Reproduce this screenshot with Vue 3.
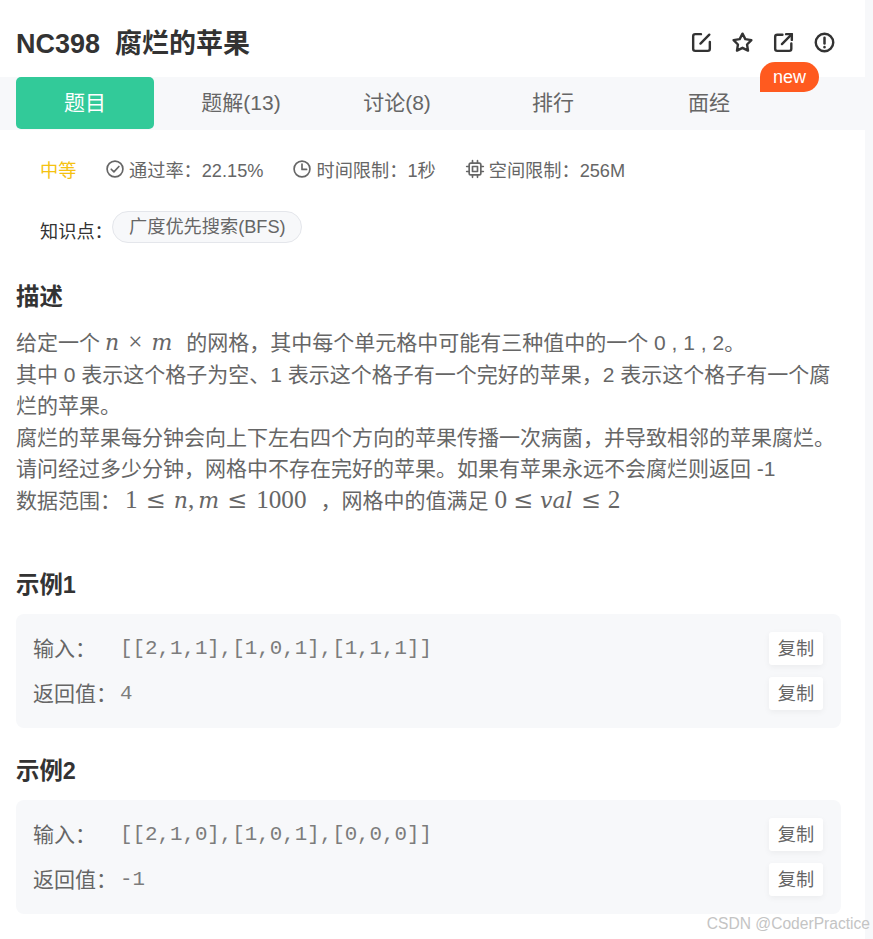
<script setup>
const tabs = ['题目', '题解(13)', '讨论(8)', '排行', '面经']
const examples = [
  { title: '示例1', input: '[[2,1,1],[1,0,1],[1,1,1]]', output: '4' },
  { title: '示例2', input: '[[2,1,0],[1,0,1],[0,0,0]]', output: '-1' }
]
</script>

<template>
  <div class="page">
    <main class="main">
      <header class="head">
        <h1 class="title">NC398&nbsp;&nbsp;腐烂的苹果</h1>
        <div class="actions">
          <svg class="act" viewBox="0 0 24 24"><path d="M11.500 4H6a2 2 0 0 0-2 2v12a2 2 0 0 0 2 2h12a2 2 0 0 0 2-2v-6.500" /><path d="M11 13 19.500 4.500" /></svg>
          <svg class="act" viewBox="0 0 24 24"><path d="M12 3.500 14.700 8.780 20.560 9.720 16.370 13.920 17.290 19.780 12 17.100 6.710 19.780 7.630 13.920 3.440 9.720 9.300 8.780z" /></svg>
          <svg class="act" viewBox="0 0 24 24"><path d="M11 4.500H6a2 2 0 0 0-2 2v11.500a2 2 0 0 0 2 2h11.500a2 2 0 0 0 2-2v-5" /><path d="M10.500 13.500 20 4" /><path d="M14.500 4H20v5.500" /></svg>
          <svg class="act" viewBox="0 0 24 24"><circle cx="12" cy="12" r="8.400" /><path d="M12 7.500v5.500" stroke-width="2.400" /><path d="M12 16.200v.3" stroke-width="2.400" /></svg>
        </div>
      </header>

      <nav class="tabs">
        <div v-for="(t, i) in tabs" :key="t" class="tab" :class="{ active: i === 0 }">{{ t }}</div>
        <span class="badge">new</span>
      </nav>

      <section class="meta">
        <span class="level">中等</span>
        <span class="stat">
          <svg class="mini" viewBox="0 0 24 24"><circle cx="12" cy="12" r="9.500" /><path d="M7.500 12.300l3.200 3.200 6-6.500" /></svg>
          通过率：22.15%
        </span>
        <span class="stat">
          <svg class="mini" viewBox="0 0 24 24"><circle cx="12" cy="12" r="9.500" /><path d="M12 6v6.500h5.500" /></svg>
          时间限制：1秒
        </span>
        <span class="stat">
          <svg class="mini" viewBox="0 0 24 24"><rect x="5" y="5" width="14" height="14" rx="2" /><rect x="9" y="9" width="6" height="6" /><path d="M9 2v3M15 2v3M9 19v3M15 19v3M2 9h3M2 15h3M19 9h3M19 15h3" /></svg>
          空间限制：256M
        </span>
      </section>

      <section class="topics">
        <span class="topics-label">知识点：</span>
        <span class="chip">广度优先搜索(BFS)</span>
      </section>

      <h2 class="h-desc">描述</h2>
      <div class="desc">
        <p>给定一个<span class="math m-nm"><i>n</i><span class="op">×</span><i>m</i></span>的网格，其中每个单元格中可能有三种值中的一个 0 , 1 , 2。</p>
        <p>其中 0 表示这个格子为空、1 表示这个格子有一个完好的苹果，2 表示这个格子有一个腐烂的苹果。</p>
        <p>腐烂的苹果每分钟会向上下左右四个方向的苹果传播一次病菌，并导致相邻的苹果腐烂。</p>
        <p>请问经过多少分钟，网格中不存在完好的苹果。如果有苹果永远不会腐烂则返回 -1</p>
        <p>数据范围：<span class="math m-range">1<span class="rel r1">≤</span><i>n</i>,<i class="after-comma">m</i><span class="rel r2">≤</span>1000</span>，网格中的值满足 <span class="math">0<span class="rel r3">≤</span><i>val</i><span class="rel r4">≤</span>2</span></p>
      </div>

      <section v-for="ex in examples" :key="ex.title" class="example">
        <h2 class="h-ex">{{ ex.title }}</h2>
        <div class="card">
          <div class="row">
            <span class="label">输入：</span>
            <code class="code">{{ ex.input }}</code>
            <button class="copy">复制</button>
          </div>
          <div class="row">
            <span class="label">返回值：</span>
            <code class="code">{{ ex.output }}</code>
            <button class="copy">复制</button>
          </div>
        </div>
      </section>
    </main>
    <aside class="strip"></aside>
    <span class="mark">CSDN @CoderPractice</span>
  </div>
</template>

<style scoped>
.page {
  position: relative;
  display: flex;
  width: 873px;
  height: 939px;
  overflow: hidden;
  background: #fff;
  color: #666;
  font-family: "Liberation Sans", "Noto Sans CJK SC", sans-serif;
}
.main { width: 865px; flex: none; }
.strip { flex: 1; background: #f7f8fa; }
.head {
  height: 77px;
  padding: 10px 28px 0 16px;
  box-sizing: border-box;
  display: flex;
  align-items: center;
  justify-content: space-between;
}
.title { margin: 0; font-size: 27px; line-height: 36px; font-weight: 700; color: #333; }
.actions { display: flex; gap: 16px; position: relative; top: -1px; }
.act { width: 25px; height: 25px; fill: none; stroke: #333; stroke-width: 2.300; stroke-linecap: round; stroke-linejoin: round; }
.tabs {
  position: relative;
  display: flex;
  gap: 18px;
  height: 53px;
  width: 873px;
  padding-left: 16px;
  box-sizing: border-box;
  background: #f7f8fa;
}
.tab {
  width: 138px;
  height: 52px;
  line-height: 52px;
  text-align: center;
  font-size: 21px;
  color: #666;
  border-radius: 5px;
}
.tab.active { background: #32ca99; color: #fff; }
.badge {
  position: absolute;
  left: 760px;
  top: -15px;
  width: 59px;
  height: 30px;
  line-height: 30px;
  text-align: center;
  font-size: 18px;
  color: #fff;
  background: #ff5a1f;
  border-radius: 15px 15px 15px 0;
}
.meta {
  display: flex;
  align-items: center;
  height: 32px;
  margin-top: 23px;
  padding-left: 40px;
  font-size: 18.2px;
  color: #666;
}
.level { color: #f5c211; width: 65px; flex: none; }
.stat { display: inline-flex; align-items: center; gap: 4px; margin-right: 29px; white-space: nowrap; }
.mini { width: 20px; height: 20px; fill: none; stroke: #666; stroke-width: 2; stroke-linecap: round; stroke-linejoin: round; }
.topics {
  display: flex;
  align-items: center;
  margin-top: 26px;
  height: 32px;
  padding-left: 40px;
  font-size: 18.2px;
}
.topics-label { color: #333; width: 72px; flex: none; white-space: nowrap; position: relative; top: 3px; }
.chip {
  box-sizing: border-box;
  height: 32px;
  line-height: 31px;
  padding: 0 15.500px 0 16px;
  border: 1px solid #e4e6eb;
  border-radius: 16px;
  background: #f7f8fa;
  color: #666;
}
.h-desc { margin: 38px 0 0 16px; font-size: 23.4px; line-height: 32px; font-weight: 700; color: #333; }
.desc { margin: 14px 24px 0 16px; font-size: 21px; line-height: 31.5px; color: #666; height: 185px; }
.desc p { margin: 0; }
.math { font-family: "Liberation Serif", serif; font-size: 25.2px; line-height: 0; }
.math i { font-family: "DejaVu Serif", serif; font-size: 22px; }
.m-nm { margin: 0 14px 0 5px; }
.m-range { margin: 0 14px 0 4px; }
.after-comma { margin-left: 4px; }
.op { margin: 0 9px; }
.rel { font-family: "DejaVu Serif", serif; font-size: 24px; }
.r1 { margin: 0 8px; }
.r2 { margin: 0 9px 0 8px; }
.r3 { margin: 0 7px 0 6px; }
.r4 { margin: 0 7px 0 8px; }
.example { margin: 0 24px 0 16px; }
.h-ex { margin: 0; font-size: 23.4px; line-height: 32px; font-weight: 700; color: #333; }
.desc + .example { margin-top: 57px; }
.card {
  margin: 13px 0 27px;
  height: 114px;
  box-sizing: border-box;
  padding: 18px 18px 0 17px;
  background: #f7f8fa;
  border-radius: 8px;
}
.row { display: flex; align-items: center; height: 33px; margin-bottom: 12px; }
.label { font-size: 21px; color: #666; flex: none; width: 87px; padding-bottom: 4px; }
.code { font-family: "Liberation Mono", monospace; font-size: 20.8px; color: #7c7c7c; flex: 1; }
.copy {
  flex: none;
  width: 54px;
  height: 33px;
  padding: 0 0 3px;
  border: 0;
  border-radius: 3px;
  background: #fff;
  box-shadow: 0 2px 6px rgba(0, 0, 0, .05);
  font-family: inherit;
  font-size: 18.2px;
  color: #666;
}
.mark {
  position: absolute;
  right: 3px;
  top: 914px;
  font-size: 15.6px;
  line-height: 20px;
  color: #c4c4c4;
  white-space: nowrap;
}
</style>
